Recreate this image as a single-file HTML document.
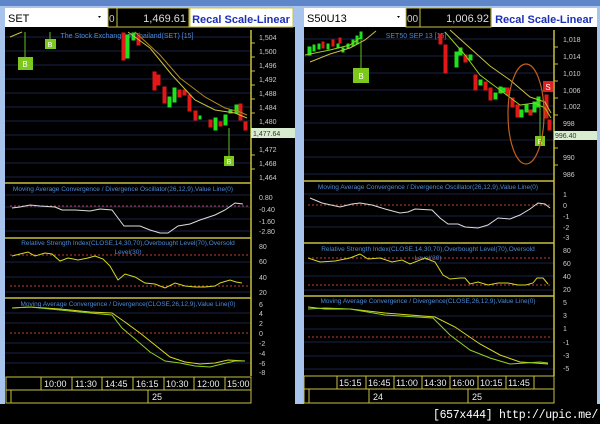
<!DOCTYPE html>
<html><head><meta charset="utf-8"><style>
html,body{margin:0;padding:0;background:#000;width:600px;height:424px;overflow:hidden}
svg{display:block}
text{font-family:"Liberation Sans",sans-serif}
</style></head><body>
<svg width="600" height="424" viewBox="0 0 600 424" xmlns="http://www.w3.org/2000/svg">
<rect width="600" height="424" fill="#000"/>
<!-- LEFT PANEL frame -->
<rect x="0" y="0" width="298" height="404" fill="#a8c4ec"/>
<rect x="0" y="0" width="298" height="6" fill="#5f86c8"/>
<rect x="5" y="27" width="246" height="350" fill="#000"/>
<rect x="251" y="27" width="44" height="377" fill="#000"/>
<rect x="5" y="376" width="246" height="28" fill="#000"/>
<!-- controls -->
<rect x="5" y="8" width="103" height="19" fill="#fff"/>
<text x="8" y="22" font-size="11" fill="#000">SET</text>
<path d="M98 16l3 0l-1.5 2z" fill="#000"/>
<rect x="108" y="8" width="9" height="19" fill="#000" stroke="#c8c040"/>
<text x="109" y="22" font-size="10" fill="#ccc">0</text>
<rect x="117" y="8" width="72" height="19" fill="#000" stroke="#c8c040"/>
<text x="186" y="22" font-size="11" fill="#ddd" text-anchor="end">1,469.61</text>
<rect x="190" y="8" width="103" height="19" fill="#fff" stroke="#c8c040"/>
<text x="241" y="23" font-size="11" fill="#1c2fb8" font-weight="bold" text-anchor="middle">Recal Scale-Linear</text>
<!-- grid left price -->
<g stroke="#1c2048" stroke-width="1">
<line x1="5" y1="37" x2="251" y2="37"/><line x1="5" y1="51" x2="251" y2="51"/><line x1="5" y1="65" x2="251" y2="65"/><line x1="5" y1="79" x2="251" y2="79"/><line x1="5" y1="93" x2="251" y2="93"/><line x1="5" y1="107" x2="251" y2="107"/><line x1="5" y1="121" x2="251" y2="121"/><line x1="5" y1="135" x2="251" y2="135"/><line x1="5" y1="149" x2="251" y2="149"/><line x1="5" y1="163" x2="251" y2="163"/><line x1="5" y1="177" x2="251" y2="177"/>
<line x1="5" y1="195" x2="251" y2="195"/><line x1="5" y1="207" x2="251" y2="207"/><line x1="5" y1="219" x2="251" y2="219"/><line x1="5" y1="231" x2="251" y2="231"/>
<line x1="5" y1="262" x2="251" y2="262"/><line x1="5" y1="277" x2="251" y2="277"/><line x1="5" y1="292" x2="251" y2="292"/>
<line x1="5" y1="313" x2="251" y2="313"/><line x1="5" y1="323" x2="251" y2="323"/><line x1="5" y1="343" x2="251" y2="343"/><line x1="5" y1="353" x2="251" y2="353"/><line x1="5" y1="363" x2="251" y2="363"/>
</g>
<g stroke="#c8c040" stroke-width="1.5">
<line x1="251" y1="30" x2="251" y2="376"/>
<line x1="5" y1="183" x2="251" y2="183"/><line x1="5" y1="238" x2="251" y2="238"/><line x1="5" y1="298" x2="251" y2="298"/>
</g>
<text x="127" y="38" font-size="7" fill="#4a8ad8" text-anchor="middle">The Stock Exchange of Thailand(SET) [15]</text>
<!-- left candles -->
<g stroke-width="1">
<g fill="#e01818" stroke="#e01818"><rect x="122" y="33" width="3" height="27"/><rect x="137" y="35" width="3" height="10"/><rect x="153" y="72" width="3" height="18"/><rect x="157" y="75" width="3" height="10"/><rect x="163" y="87" width="3" height="16"/><rect x="178" y="90" width="3" height="7"/><rect x="183" y="90" width="3" height="5"/><rect x="188" y="95" width="3" height="16"/><rect x="194" y="111" width="3" height="9"/><rect x="209" y="120" width="3" height="7"/><rect x="219" y="122" width="3" height="4"/><rect x="239" y="104" width="3" height="16"/><rect x="244" y="122" width="3" height="8"/></g>
<g fill="#20e020" stroke="#20e020"><rect x="126" y="35" width="3" height="23"/><rect x="132" y="33" width="3" height="7"/><rect x="168" y="97" width="3" height="10"/><rect x="173" y="88" width="3" height="14"/><rect x="199" y="116" width="2" height="3"/><rect x="214" y="118" width="3" height="12"/><rect x="224" y="115" width="3" height="10"/><rect x="229" y="110" width="3" height="3"/><rect x="235" y="105" width="3" height="8"/></g>
</g>
<polyline points="128,32 150,48 172,75 195,100 215,110 235,113 247,118" fill="none" stroke="#c8c040" stroke-width="1"/>
<polyline points="135,32 160,55 180,78 205,97 225,108 240,112 247,115" fill="none" stroke="#b08820" stroke-width="1"/>
<polyline points="10,37 22,32" stroke="#c8c040"/>
<line x1="25" y1="32" x2="25" y2="58" stroke="#60c020"/><rect x="18" y="57" width="15" height="13" fill="#7cc81c"/><text x="25" y="67" font-size="8" fill="#fff" text-anchor="middle">B</text>
<line x1="50" y1="32" x2="50" y2="39" stroke="#60c020"/><rect x="45" y="39" width="11" height="10" fill="#7cc81c"/><text x="50" y="47" font-size="7" fill="#fff" text-anchor="middle">B</text>
<line x1="229" y1="128" x2="229" y2="157" stroke="#60c020"/><rect x="224" y="156" width="10" height="10" fill="#7cc81c"/><text x="229" y="164" font-size="7" fill="#fff" text-anchor="middle">B</text>
<!-- left axis labels -->
<g font-size="7" fill="#ccc">
<text x="259" y="40">1,504</text><text x="259" y="54">1,500</text><text x="259" y="68">1,496</text><text x="259" y="82">1,492</text><text x="259" y="96">1,488</text><text x="259" y="110">1,484</text><text x="259" y="124">1,480</text><text x="259" y="152">1,472</text><text x="259" y="166">1,468</text><text x="259" y="180">1,464</text>
<text x="259" y="200">0.80</text><text x="259" y="212">-0.40</text><text x="259" y="224">-1.60</text><text x="259" y="234">-2.80</text>
<text x="259" y="249">80</text><text x="259" y="264">60</text><text x="259" y="280">40</text><text x="259" y="295">20</text>
<text x="259" y="307">6</text><text x="259" y="316">4</text><text x="259" y="326">2</text><text x="259" y="336">0</text><text x="259" y="346">-2</text><text x="259" y="356">-4</text><text x="259" y="366">-6</text><text x="259" y="375">-8</text>
</g>
<rect x="251" y="128" width="44" height="10" fill="#d8ecd0"/><text x="253" y="136" font-size="7" fill="#333">1,477.64</text>
<g stroke="#c8c040"><line x1="251" y1="43" x2="255" y2="43"/><line x1="251" y1="57" x2="255" y2="57"/><line x1="251" y1="71" x2="255" y2="71"/><line x1="251" y1="85" x2="255" y2="85"/><line x1="251" y1="99" x2="255" y2="99"/><line x1="251" y1="113" x2="255" y2="113"/><line x1="251" y1="155" x2="255" y2="155"/><line x1="251" y1="169" x2="255" y2="169"/></g>
<!-- left osc -->
<text x="123" y="191" font-size="6.5" fill="#4a8ad8" text-anchor="middle">Moving Average Convergence / Divergence Oscillator(26,12,9),Value Line(0)</text>
<line x1="10" y1="206" x2="248" y2="206" stroke="#c04040" stroke-dasharray="2,2"/>
<polyline points="12,208 20,207 30,205 40,206 55,207 62,210 75,210 90,211 100,209 112,210 118,218 124,226 140,226 150,230 160,233 168,233 178,226 190,224 200,220 215,215 225,210 235,203 243,204" fill="none" stroke="#ddd"/>
<!-- left rsi -->
<text x="128" y="245" font-size="6.5" fill="#4a8ad8" text-anchor="middle">Relative Strength Index(CLOSE,14,30,70),Overbought Level(70),Oversold</text>
<text x="128" y="254" font-size="6.5" fill="#4a8ad8" text-anchor="middle">Level(30)</text>
<line x1="10" y1="255" x2="248" y2="255" stroke="#c04040" stroke-dasharray="2,2"/>
<line x1="10" y1="286" x2="248" y2="286" stroke="#c04040" stroke-dasharray="2,2"/>
<polyline points="12,256 20,254 28,252 35,256 45,253 52,254 60,261 68,258 78,260 88,258 95,256 103,259 110,266 118,280 125,274 135,277 145,283 155,284 165,288 175,283 185,286 195,287 205,287 215,286 220,283 230,280 236,282 242,283" fill="none" stroke="#d8d820"/>
<!-- left macd -->
<text x="128" y="306" font-size="6.5" fill="#4a8ad8" text-anchor="middle">Moving Average Convergence / Divergence(CLOSE,26,12,9),Value Line(0)</text>
<line x1="10" y1="333" x2="248" y2="333" stroke="#c04040" stroke-dasharray="2,2"/>
<polyline points="12,308 30,307 60,309 90,312 112,313 125,322 140,333 155,345 170,357 185,362 200,364 215,363 228,360 245,361" fill="none" stroke="#d8d820"/>
<polyline points="12,308 30,307 60,310 90,313 112,315 122,328 135,339 150,352 165,361 180,363 195,366 210,367 222,364 235,361 245,361" fill="none" stroke="#90d020"/>
<!-- left time axis -->
<g stroke="#c8c040" fill="none"><rect x="6" y="377" width="245" height="13"/><rect x="6" y="390" width="245" height="13"/>
<line x1="41" y1="377" x2="41" y2="390"/><line x1="72" y1="377" x2="72" y2="390"/><line x1="102" y1="377" x2="102" y2="390"/><line x1="133" y1="377" x2="133" y2="390"/><line x1="164" y1="377" x2="164" y2="390"/><line x1="194" y1="377" x2="194" y2="390"/><line x1="225" y1="377" x2="225" y2="390"/><line x1="11" y1="390" x2="11" y2="403"/><line x1="148" y1="390" x2="148" y2="403"/></g>
<g font-size="9" fill="#eee"><text x="44" y="387">10:00</text><text x="75" y="387">11:30</text><text x="105" y="387">14:45</text><text x="136" y="387">16:15</text><text x="166" y="387">10:30</text><text x="197" y="387">12:00</text><text x="227" y="387">15:00</text><text x="152" y="400">25</text></g>

<!-- RIGHT PANEL -->
<rect x="298" y="0" width="302" height="404" fill="#a8c4ec"/>
<rect x="298" y="0" width="302" height="6" fill="#5f86c8"/>
<rect x="304" y="27" width="250" height="377" fill="#000"/>
<rect x="554" y="27" width="43" height="377" fill="#000"/>
<rect x="304" y="8" width="102" height="19" fill="#fff"/>
<text x="307" y="22" font-size="11" fill="#000">S50U13</text>
<path d="M397 16l3 0l-1.5 2z" fill="#000"/>
<rect x="406" y="8" width="14" height="19" fill="#000" stroke="#c8c040"/>
<text x="407" y="22" font-size="10" fill="#ccc">00</text>
<rect x="420" y="8" width="71" height="19" fill="#000" stroke="#c8c040"/>
<text x="489" y="22" font-size="11" fill="#ddd" text-anchor="end">1,006.92</text>
<rect x="492" y="8" width="105" height="19" fill="#fff"/>
<text x="544" y="23" font-size="11" fill="#1c2fb8" font-weight="bold" text-anchor="middle">Recal Scale-Linear</text>
<g stroke="#1c2048">
<line x1="304" y1="39" x2="554" y2="39"/><line x1="304" y1="56" x2="554" y2="56"/><line x1="304" y1="73" x2="554" y2="73"/><line x1="304" y1="90" x2="554" y2="90"/><line x1="304" y1="106" x2="554" y2="106"/><line x1="304" y1="123" x2="554" y2="123"/><line x1="304" y1="140" x2="554" y2="140"/><line x1="304" y1="157" x2="554" y2="157"/><line x1="304" y1="174" x2="554" y2="174"/>
<line x1="304" y1="194" x2="554" y2="194"/><line x1="304" y1="216" x2="554" y2="216"/><line x1="304" y1="227" x2="554" y2="227"/>
<line x1="304" y1="263" x2="554" y2="263"/><line x1="304" y1="276" x2="554" y2="276"/><line x1="304" y1="290" x2="554" y2="290"/>
<line x1="304" y1="316" x2="554" y2="316"/><line x1="304" y1="329" x2="554" y2="329"/><line x1="304" y1="342" x2="554" y2="342"/><line x1="304" y1="356" x2="554" y2="356"/><line x1="304" y1="369" x2="554" y2="369"/>
</g>
<g stroke="#c8c040" stroke-width="1.5">
<line x1="554" y1="30" x2="554" y2="376"/>
<line x1="304" y1="181" x2="554" y2="181"/><line x1="304" y1="243" x2="554" y2="243"/><line x1="304" y1="296" x2="554" y2="296"/>
</g>
<text x="416" y="38" font-size="7" fill="#4a8ad8" text-anchor="middle">SET50 SEP 13 [15]</text>
<g fill="#e01818" stroke="#e01818"><rect x="322" y="42" width="2" height="6"/><rect x="332" y="40" width="2" height="6"/><rect x="339" y="38" width="2" height="5"/><rect x="439" y="34" width="3" height="10"/><rect x="444" y="45" width="3" height="28"/><rect x="464" y="55" width="3" height="7"/><rect x="474" y="75" width="3" height="15"/><rect x="484" y="82" width="3" height="8"/><rect x="489" y="88" width="3" height="12"/><rect x="506" y="88" width="3" height="7"/><rect x="511" y="98" width="3" height="9"/><rect x="516" y="105" width="3" height="12"/><rect x="529" y="110" width="3" height="5"/><rect x="545" y="95" width="3" height="23"/><rect x="548" y="120" width="3" height="10"/></g>
<g fill="#20e020" stroke="#20e020"><rect x="308" y="47" width="3" height="8"/><rect x="313" y="45" width="2" height="6"/><rect x="318" y="44" width="2" height="5"/><rect x="327" y="44" width="2" height="5"/><rect x="337" y="44" width="2" height="4"/><rect x="342" y="48" width="2" height="4"/><rect x="347" y="44" width="2" height="4"/><rect x="352" y="40" width="2" height="6"/><rect x="356" y="36" width="2" height="8"/><rect x="360" y="32" width="2" height="7"/><rect x="455" y="52" width="3" height="15"/><rect x="459" y="48" width="3" height="7"/><rect x="469" y="55" width="3" height="5"/><rect x="479" y="80" width="3" height="5"/><rect x="494" y="93" width="3" height="6"/><rect x="499" y="87" width="3" height="6"/><rect x="503" y="88" width="2" height="4"/><rect x="520" y="110" width="3" height="7"/><rect x="525" y="105" width="3" height="7"/><rect x="533" y="102" width="3" height="10"/><rect x="537" y="97" width="3" height="10"/></g>
<polyline points="310,62 330,54 350,48 365,40 376,31" fill="none" stroke="#c8c040"/>
<polyline points="305,55 330,50 350,45 360,38" fill="none" stroke="#90d020"/>
<polyline points="450,30 470,48 490,66 510,80 530,97 545,102 551,113" fill="none" stroke="#c8c040"/>
<polyline points="445,32 465,55 480,75 500,90 520,105 535,103 545,108 551,118" fill="none" stroke="#90d020"/>
<line x1="361" y1="40" x2="361" y2="68" stroke="#60c020"/><rect x="353" y="68" width="16" height="15" fill="#7cc81c"/><text x="361" y="79" font-size="8" fill="#fff" text-anchor="middle">B</text>
<line x1="540" y1="105" x2="540" y2="136" stroke="#60c020"/><rect x="535" y="136" width="10" height="10" fill="#7cc81c"/><text x="540" y="144" font-size="7" fill="#fff" text-anchor="middle">B</text>
<rect x="543" y="81" width="10" height="11" fill="#e02020"/><text x="548" y="90" font-size="8" fill="#fff" text-anchor="middle">S</text>
<ellipse cx="526" cy="114" rx="18" ry="50" fill="none" stroke="#c06020" stroke-width="1.2"/>
<g font-size="7" fill="#ccc">
<text x="563" y="42">1,018</text><text x="563" y="59">1,014</text><text x="563" y="76">1,010</text><text x="563" y="93">1,006</text><text x="563" y="109">1,002</text><text x="563" y="126">998</text><text x="563" y="160">990</text><text x="563" y="177">986</text>
<text x="563" y="197">1</text><text x="563" y="208">0</text><text x="563" y="219">-1</text><text x="563" y="230">-2</text><text x="563" y="240">-3</text>
<text x="563" y="253">80</text><text x="563" y="266">60</text><text x="563" y="279">40</text><text x="563" y="292">20</text>
<text x="563" y="305">5</text><text x="563" y="318">3</text><text x="563" y="331">1</text><text x="563" y="345">-1</text><text x="563" y="358">-3</text><text x="563" y="371">-5</text>
</g>
<rect x="554" y="131" width="43" height="9" fill="#d8ecd0"/><text x="555" y="138" font-size="7" fill="#333">996.40</text>
<g stroke="#c8c040"><line x1="554" y1="47" x2="558" y2="47"/><line x1="554" y1="64" x2="558" y2="64"/><line x1="554" y1="81" x2="558" y2="81"/><line x1="554" y1="98" x2="558" y2="98"/><line x1="554" y1="115" x2="558" y2="115"/><line x1="554" y1="148" x2="558" y2="148"/><line x1="554" y1="165" x2="558" y2="165"/></g>
<text x="428" y="189" font-size="6.5" fill="#4a8ad8" text-anchor="middle">Moving Average Convergence / Divergence Oscillator(26,12,9),Value Line(0)</text>
<line x1="308" y1="205" x2="550" y2="205" stroke="#c04040" stroke-dasharray="2,2"/>
<polyline points="310,198 322,203 340,207 352,204 360,203 372,205 385,209 400,213 408,212 415,209 432,210 440,218 448,224 458,224 465,227 478,228 488,225 498,218 510,219 520,215 530,209 538,203 545,204 550,208" fill="none" stroke="#ddd"/>
<text x="428" y="251" font-size="6.5" fill="#4a8ad8" text-anchor="middle">Relative Strength Index(CLOSE,14,30,70),Overbought Level(70),Oversold</text>
<text x="428" y="260" font-size="6.5" fill="#4a8ad8" text-anchor="middle">Level(30)</text>
<line x1="308" y1="258" x2="550" y2="258" stroke="#c04040" stroke-dasharray="2,2"/>
<line x1="308" y1="285" x2="550" y2="285" stroke="#c04040" stroke-dasharray="2,2"/>
<polyline points="308,258 320,262 335,261 350,258 360,254 368,259 380,258 392,262 402,260 410,264 425,258 435,262 443,275 450,279 460,278 465,278 470,284 478,282 488,285 498,283 508,283 518,285 526,285 533,283 537,278 543,278 548,284" fill="none" stroke="#d8d820"/>
<text x="428" y="303" font-size="6.5" fill="#4a8ad8" text-anchor="middle">Moving Average Convergence / Divergence(CLOSE,26,12,9),Value Line(0)</text>
<line x1="308" y1="337" x2="550" y2="337" stroke="#c04040" stroke-dasharray="2,2"/>
<polyline points="308,307 325,309 350,309 385,313 435,317 455,327 480,344 500,355 520,362 535,363 548,364" fill="none" stroke="#d8d820"/>
<polyline points="308,309 325,308 350,309 385,315 433,318 450,335 470,350 490,358 510,364 525,363 540,362 548,363" fill="none" stroke="#90d020"/>
<g stroke="#c8c040" fill="none"><rect x="304" y="376" width="250" height="13"/><rect x="304" y="389" width="250" height="14"/>
<line x1="337" y1="376" x2="337" y2="389"/><line x1="366" y1="376" x2="366" y2="389"/><line x1="394" y1="376" x2="394" y2="389"/><line x1="422" y1="376" x2="422" y2="389"/><line x1="450" y1="376" x2="450" y2="389"/><line x1="478" y1="376" x2="478" y2="389"/><line x1="506" y1="376" x2="506" y2="389"/><line x1="534" y1="376" x2="534" y2="389"/><line x1="309" y1="389" x2="309" y2="403"/><line x1="369" y1="389" x2="369" y2="403"/><line x1="468" y1="389" x2="468" y2="403"/></g>
<g font-size="9" fill="#eee"><text x="339" y="386">15:15</text><text x="368" y="386">16:45</text><text x="396" y="386">11:00</text><text x="424" y="386">14:30</text><text x="452" y="386">16:00</text><text x="480" y="386">10:15</text><text x="508" y="386">11:45</text><text x="373" y="400">24</text><text x="472" y="400">25</text></g>
<text x="598" y="418" font-size="11.5" fill="#fff" text-anchor="end" style="font-family:'Liberation Mono','DejaVu Sans Mono',monospace;letter-spacing:-0.3px">[657x444] http://upic.me/</text>
</svg>
</body></html>
